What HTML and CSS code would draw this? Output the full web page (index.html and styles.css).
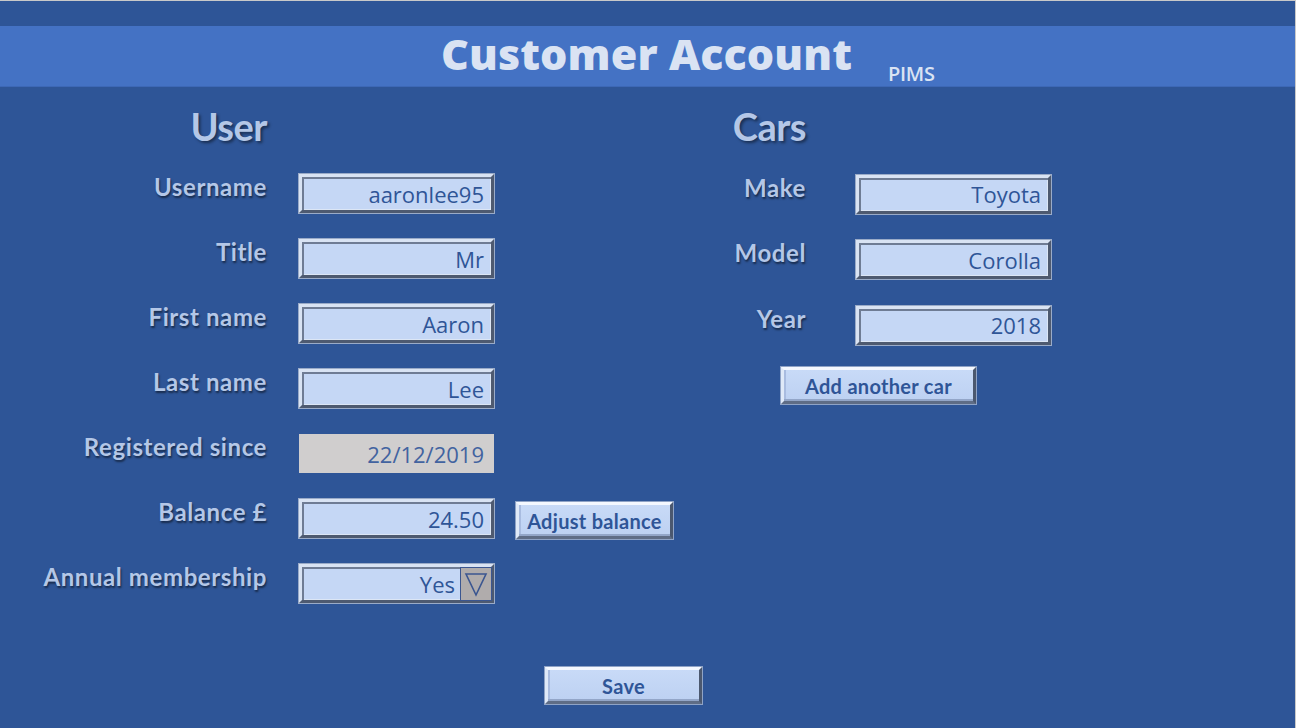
FILE: index.html
```html
<!DOCTYPE html>
<html>
<head>
<meta charset="utf-8">
<title>Customer Account</title>
<link rel="stylesheet" href="styles.css">
</head>
<body>
<div class="page">
  <div class="topbar"></div>
  <header class="header">
    <h1 class="title">Customer Account</h1>
    <span class="pims">PIMS</span>
  </header>
  <main class="content">
    <section class="user">
      <h2 class="heading">User</h2>
      <div class="spacer"></div>
      <div class="spacer"></div>

      <label class="label">Username</label>
      <div class="field"><span>aaronlee95</span></div>
      <div></div>

      <label class="label">Title</label>
      <div class="field"><span>Mr</span></div>
      <div></div>

      <label class="label">First name</label>
      <div class="field"><span>Aaron</span></div>
      <div></div>

      <label class="label">Last name</label>
      <div class="field"><span>Lee</span></div>
      <div></div>

      <label class="label">Registered since</label>
      <div class="field flat"><span>22/12/2019</span></div>
      <div></div>

      <label class="label">Balance £</label>
      <div class="field"><span>24.50</span></div>
      <div class="btn-cell"><button class="btn btn-adjust">Adjust balance</button></div>

      <label class="label">Annual membership</label>
      <div class="field combo"><span>Yes</span>
        <span class="arrow"><svg width="26" height="28" viewBox="0 0 26 28"><path d="M3 4 L23 4 L13 25 Z" fill="none" stroke="#3b5690" stroke-width="1.6" stroke-linejoin="miter"/></svg></span>
      </div>
      <div></div>
    </section>

    <section class="cars">
      <h2 class="heading">Cars</h2>
      <div class="spacer"></div>

      <label class="label">Make</label>
      <div class="field"><span>Toyota</span></div>

      <label class="label">Model</label>
      <div class="field"><span>Corolla</span></div>

      <label class="label">Year</label>
      <div class="field"><span>2018</span></div>

      <div class="add-row"><button class="btn btn-add">Add another car</button></div>
    </section>
  </main>
  <footer class="footer">
    <button class="btn btn-save">Save</button>
  </footer>
</div>
</body>
</html>
```

FILE: styles.css
```css
* { box-sizing: border-box; }
html, body { margin: 0; padding: 0; }
body {
  background: #2e5597;
  font-family: "Lato", "Open Sans", sans-serif;
  width: 1296px;
  height: 728px;
  overflow: hidden;
}
.page {
  width: 1296px;
  height: 728px;
  border-top: 1px solid #c9c9c9;
  border-right: 1px solid #c9c9c9;
  background: #2e5597;
}
.topbar { height: 25px; }
.header {
  height: 61px;
  background: #4472c4;
  border-bottom: 1px solid #3d68b6;
  display: flex;
  justify-content: center;
  align-items: flex-start;
  position: relative;
}
.title {
  margin: 2px 0 0 -2px;
  font-family: "Open Sans", sans-serif;
  font-weight: 800;
  font-size: 43px;
  line-height: 52px;
  color: #dae3f3;
  letter-spacing: 0.1px;
}
.pims {
  position: absolute;
  left: 888px;
  top: 34px;
  font-family: "Open Sans", sans-serif;
  font-weight: 600;
  font-size: 20px;
  color: #dae3f3;
  letter-spacing: -0.3px;
}
.content {
  display: flex;
  height: 580px;
}
.user {
  display: grid;
  grid-template-columns: 267px 195px 180px;
  grid-auto-rows: 39px;
  column-gap: 32px;
  row-gap: 26px;
  align-content: start;
  padding-top: 22px;
}
.user .btn-cell { margin-left: -10px; }
.cars {
  display: grid;
  grid-template-columns: 103px 195px;
  column-gap: 50px;
  grid-auto-rows: 39px;
  row-gap: 26.5px;
  align-content: start;
  padding-top: 22px;
  margin-left: -3px;
}
.heading {
  margin: -5px 0 0 0;
  text-align: right;
  font-family: "Lato", sans-serif;
  font-weight: 700;
  font-size: 38px;
  line-height: 45px;
  color: #b4c7e7;
  text-shadow: 2px 2px 3px rgba(0, 0, 0, 0.45);
  letter-spacing: -0.5px;
  height: 39px;
}
.label {
  text-align: right;
  font-family: "Lato", sans-serif;
  font-weight: 700;
  font-size: 24px;
  line-height: 26px;
  letter-spacing: 0.6px;
  color: #b4c7e7;
  text-shadow: 1px 2px 2px rgba(0, 0, 0, 0.5);
  white-space: nowrap;
}
.field {
  height: 39px;
  background: #c5d7f5;
  border: 3px solid;
  border-color: #d9e3f3 #4e5a70 #4e5a70 #d9e3f3;
  box-shadow: inset 2px 2px 0 #6f7c94, inset -1px -1px 0 #dce6f5, 0 0 0 1px #9aabc8;
  display: flex;
  align-items: center;
  justify-content: flex-end;
  padding: 0 7px 0 6px;
  font-family: "Open Sans", "Noto Sans", sans-serif;
  font-size: 22px;
  color: #2f5597;
}
.field span { line-height: 30px; }
.field.flat {
  background: #d0cece;
  border: none;
  box-shadow: none;
  padding-right: 10px;
  color: #4263a0;
}
.field.combo { padding-right: 0; gap: 5px; }
.arrow {
  width: 32px;
  height: 34px;
  background: #b0acac;
  border: 1px solid #3b5690;
  display: flex;
  align-items: center;
  justify-content: center;
  margin-right: -1px;
}
.arrow svg { display: block; }
.btn {
  display: block;
  height: 37px;
  background: linear-gradient(#c8daf7, #bdd1f2);
  border: 3px solid;
  border-color: #f4f8ff #4b586f #5f6d86 #dfe9f8;
  box-shadow: 0 0 0 1px #8fa3c6, inset 0 -2px 0 #93a6c8, inset 2px 0 0 #a9bce0;
  font-family: "Lato", sans-serif;
  font-weight: 700;
  font-size: 20px;
  letter-spacing: 0.3px;
  color: #2f5597;
  padding: 0;
  cursor: pointer;
}
.btn-adjust { width: 157px; margin-top: 3px; }
.add-row {
  grid-column: 1 / span 2;
  padding-left: 78px;
  margin-top: -4px;
}
.btn-add { width: 195px; }
.footer { padding-left: 545px; }
.btn-save { width: 157px; }
```
